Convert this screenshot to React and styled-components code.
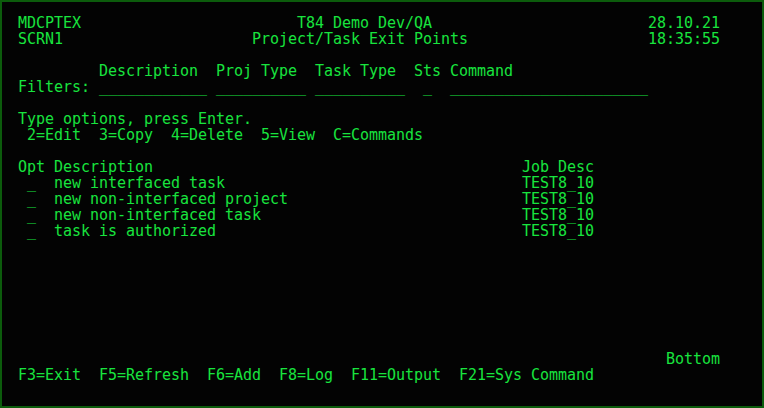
import React from 'react';
import styled, { createGlobalStyle } from 'styled-components';

const GlobalStyle = createGlobalStyle`
	html, body {
		margin: 0;
		padding: 0;
		background: #000000;
	}
`;

// 5250 style display: 24 rows x 80 columns, 9px x 16px cells
const COLS = 80;

const Screen = styled.div`
	width: 764px;
	height: 408px;
	box-sizing: border-box;
	border: 2px solid #0c5c0c;
	background: #030303;
	padding: 13px 0 0 7px;
	overflow: hidden;
`;

const Grid = styled.div`
	display: flex;
	flex-direction: column;
	width: ${COLS * 9}px;
`;

const Line = styled.div`
	height: 16px;
	line-height: 16px;
	white-space: pre;
	font-family: 'DejaVu Sans Mono', 'Liberation Mono', monospace;
	font-size: 15px;
	letter-spacing: -0.03px;
	color: ${({ dim }) => (dim ? '#10c836' : '#18e43e')};
`;

// each segment is [column (1-based), text]
const buildRow = (segments) => {
	let row = '';
	segments.forEach(([col, text]) => {
		row = row.padEnd(col - 1, ' ') + text;
	});
	return row.padEnd(COLS, ' ').slice(0, COLS);
};

const records = [
	'new interfaced task',
	'new non-interfaced project',
	'new non-interfaced task',
	'task is authorized',
];

const rows = [
	[[2, 'MDCPTEX'], [33, 'T84 Demo Dev/QA'], [72, '28.10.21']],
	[[2, 'SCRN1'], [28, 'Project/Task Exit Points'], [72, '18:35:55']],
	[],
	[[11, 'Description'], [24, 'Proj Type'], [35, 'Task Type'], [46, 'Sts'], [50, 'Command']],
	[[2, 'Filters:'], [11, '_'.repeat(12)], [24, '_'.repeat(10)], [35, '_'.repeat(10)], [47, '_'], [50, '_'.repeat(22)]],
	[],
	[[2, 'Type options, press Enter.']],
	[[3, '2=Edit  3=Copy  4=Delete  5=View  C=Commands']],
	[],
	[[2, 'Opt Description'], [58, 'Job Desc']],
	...records.map((desc) => [[3, '_'], [6, desc], [58, 'TEST8_10']]),
];

while (rows.length < 21) rows.push([]);
rows.push([[74, 'Bottom']]);
rows.push([[2, 'F3=Exit  F5=Refresh  F6=Add  F8=Log  F11=Output  F21=Sys Command']]);
rows.push([]);

const App = () => (
	<>
		<GlobalStyle />
		<Screen>
			<Grid>
				{rows.map((segments, idx) => (
					<Line key={idx}>{buildRow(segments)}</Line>
				))}
			</Grid>
		</Screen>
	</>
);

export default App;
